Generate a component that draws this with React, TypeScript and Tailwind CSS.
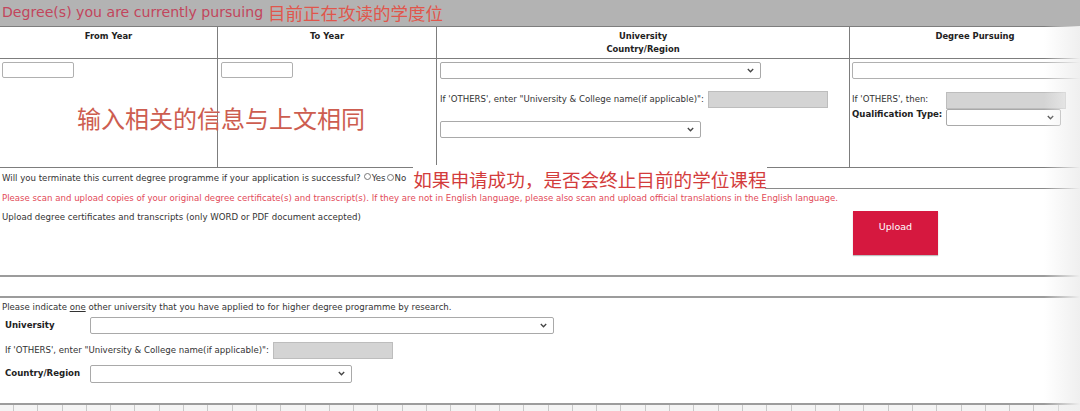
import React from 'react';

// Fake form controls, drawn with plain divs so every browser shows the same box
function Select({ className = '' }: { className?: string }) {
  return (
    <div className={`flex items-center justify-end bg-white border border-[#a9a9a9] rounded-[2px] pr-[6px] ${className}`}>
      <svg width="7" height="5" viewBox="0 0 7 5" className="text-[#444]">
        <path d="M0.8 1 L3.5 3.8 L6.2 1" fill="none" stroke="currentColor" strokeWidth="1.3" />
      </svg>
    </div>
  );
}

function TextBox({ className = '' }: { className?: string }) {
  return <div className={`bg-white border border-[#b0b0b0] rounded-[2px] ${className}`} />;
}

function Disabled({ className = '' }: { className?: string }) {
  return <div className={`bg-[#d4d4d4] border border-[#bdbdbd] ${className}`} />;
}

function Radio() {
  return <span className="inline-block w-[7px] h-[7px] rounded-full border border-[#777] bg-white mx-[1px] translate-y-[-1px]" />;
}

const cjk = "font-['Noto_Sans_CJK_SC',sans-serif]";

export default function App() {
  return (
    <div className="relative w-[1080px] h-[411px] overflow-hidden bg-white font-['DejaVu_Sans',Verdana,sans-serif] text-[8.6px] text-[#333]">
      {/* Section title */}
      <div className="h-[26px] bg-[#b3b3b3] flex items-center pl-[2px] gap-[5px] whitespace-nowrap">
        <span className="text-[14.1px] text-[#c2455c]">Degree(s) you are currently pursuing</span>
        <span className={`${cjk} text-[17.5px] text-[#e0564c]`}>目前正在攻读的学度位</span>
      </div>

      {/* Current degree table */}
      <div className="relative w-[1140px] border-t border-[#7d7d7d] grid grid-cols-[218px_219px_413px_290px]">
        <div className="h-[32px] border-b border-r border-[#7d7d7d] font-bold text-[8.4px] text-[#222] text-center pt-[3px]">From Year</div>
        <div className="h-[32px] border-b border-r border-[#7d7d7d] font-bold text-[8.4px] text-[#222] text-center pt-[3px]">To Year</div>
        <div className="h-[32px] border-b border-r border-[#7d7d7d] font-bold text-[8.4px] text-[#222] text-center pt-[3px] leading-[13px]">
          University
          <br />
          Country/Region
        </div>
        <div className="h-[32px] border-b border-[#7d7d7d] font-bold text-[8.4px] text-[#222] text-center pt-[3px] pr-[40px]">Degree Pursuing</div>

        <div className="h-[109px] border-b border-r border-[#7d7d7d] pl-[2px] pt-[3px]">
          <TextBox className="w-[72px] h-[16px]" />
        </div>
        <div className="h-[109px] border-b border-r border-[#7d7d7d] pl-[3px] pt-[3px]">
          <TextBox className="w-[72px] h-[16px]" />
        </div>
        <div className="h-[109px] border-b border-r border-[#7d7d7d] pl-[3px] pt-[3px] flex flex-col items-start">
          <Select className="w-[321px] h-[17px]" />
          <div className="flex items-center gap-[4px] mt-[12px] whitespace-nowrap">
            <span>If 'OTHERS', enter "University &amp; College name(if applicable)":</span>
            <Disabled className="w-[120px] h-[17px]" />
          </div>
          <Select className="w-[261px] h-[17px] mt-[13px]" />
        </div>
        <div className="h-[109px] border-b border-[#7d7d7d] pl-[2px] pt-[3px]">
          <TextBox className="w-[260px] h-[17px]" />
          <div className="flex mt-[13px]">
            <div className="w-[94px] leading-[15px] whitespace-nowrap">
              <div>If 'OTHERS', then:</div>
              <div className="font-bold text-[8.6px] text-[#222]">Qualification Type:</div>
            </div>
            <div className="flex flex-col">
              <Disabled className="w-[120px] h-[17px]" />
              <Select className="w-[115px] h-[17px]" />
            </div>
          </div>
        </div>

        <div className={`absolute left-[77px] top-[76px] ${cjk} text-[24px] leading-[30px] text-[#cd5d50] whitespace-nowrap`}>
          输入相关的信息与上文相同
        </div>
      </div>

      {/* Terminate question */}
      <div className="relative h-[21px] flex items-center pl-[2px] whitespace-nowrap">
        <span>Will you terminate this current degree programme if your application is successful?</span>
        <span className="ml-[2px]"><Radio /></span>
        <span>Yes</span>
        <Radio />
        <span>No</span>
        <span className={`${cjk} text-[18.6px] text-[#d33c3c] ml-[7px] bg-white`}>如果申请成功，是否会终止目前的学位课程</span>
        <div className="absolute left-[765px] right-0 bottom-0 border-b border-[#8a8a8a]" />
      </div>

      {/* Upload block */}
      <div className="h-[19px] flex items-center pl-[2px] text-[#e24a58] whitespace-nowrap">
        Please scan and upload copies of your original degree certificate(s) and transcript(s). If they are not in English language, please also scan and upload official translations in the English language.
      </div>
      <div className="h-[67px] flex items-start pl-[2px] pt-[3px]">
        <span className="w-[851px] leading-[10px] mt-[1px]">Upload degree certificates and transcripts (only WORD or PDF document accepted)</span>
        <div className="w-[85px] h-[44px] bg-[#d6183f] text-white text-[9.5px] text-center pt-[9px] shadow-[0_1px_1px_rgba(0,0,0,0.25)]">Upload</div>
      </div>
      <div className="h-[2px] bg-[#9c9c9c]" />
      <div className="h-[19px]" />
      <div className="h-[2px] bg-[#9c9c9c]" />

      {/* Other university applied to */}
      <div className="h-[105px] pl-[2px] pt-[4px]">
        <div className="leading-[10px] whitespace-nowrap">
          Please indicate <span className="underline">one</span> other university that you have applied to for higher degree programme by research.
        </div>
        <div className="flex items-center mt-[5px] h-[17px]">
          <span className="w-[88px] pl-[3px] font-bold text-[8.6px] text-[#222]">University</span>
          <Select className="w-[464px] h-[17px]" />
        </div>
        <div className="flex items-center mt-[8px] h-[17px] pl-[3px] gap-[4px] whitespace-nowrap">
          <span>If 'OTHERS', enter "University &amp; College name(if applicable)":</span>
          <Disabled className="w-[120px] h-[17px]" />
        </div>
        <div className="flex items-center mt-[6px] h-[17px]">
          <span className="w-[88px] pl-[3px] font-bold text-[8.6px] text-[#222]">Country/Region</span>
          <Select className="w-[262px] h-[18px]" />
        </div>
      </div>
      <div className="h-[2px] bg-[#9c9c9c]" />

      {/* Top of the next table row */}
      <div className="h-[10px] bg-[#f4f4f4] flex pl-[13px]">
        {Array.from({ length: 44 }).map((_, i) => (
          <div key={i} className="w-[24.3px] shrink-0 border-l border-[#c8c8c8]" />
        ))}
      </div>

      {/* Soft shade along the right edge */}
      <div className="absolute top-[26px] right-0 bottom-0 w-[36px] bg-gradient-to-r from-transparent to-[#efefef] pointer-events-none" />
    </div>
  );
}
